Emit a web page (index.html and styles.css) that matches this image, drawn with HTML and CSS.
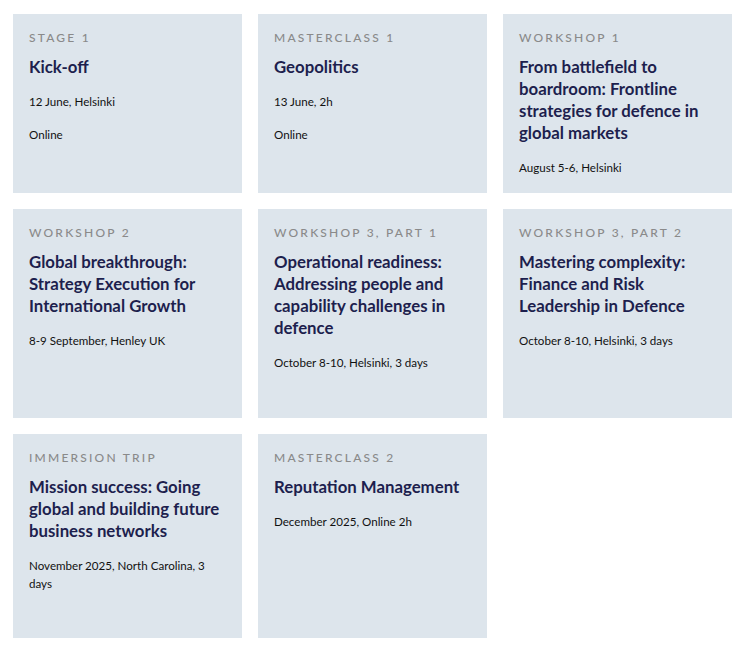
FILE: index.html
```html
<!DOCTYPE html>
<html lang="en">
<head>
<meta charset="utf-8">
<title>Programme</title>
<link rel="stylesheet" href="styles.css">
</head>
<body>
<div class="grid">
  <div class="card">
    <div class="label">Stage 1</div>
    <h3 class="title">Kick-off</h3>
    <p class="info">12 June, Helsinki</p>
    <p class="info">Online</p>
  </div>
  <div class="card">
    <div class="label">Masterclass 1</div>
    <h3 class="title">Geopolitics</h3>
    <p class="info">13 June, 2h</p>
    <p class="info">Online</p>
  </div>
  <div class="card">
    <div class="label">Workshop 1</div>
    <h3 class="title">From battlefield to boardroom: Frontline strategies for defence in global markets</h3>
    <p class="info">August 5-6, Helsinki</p>
  </div>
  <div class="card">
    <div class="label">Workshop 2</div>
    <h3 class="title">Global breakthrough: Strategy Execution for International Growth</h3>
    <p class="info">8-9 September, Henley UK</p>
  </div>
  <div class="card">
    <div class="label">Workshop 3, Part 1</div>
    <h3 class="title">Operational readiness: Addressing people and capability challenges in defence</h3>
    <p class="info">October 8-10, Helsinki, 3 days</p>
  </div>
  <div class="card">
    <div class="label">Workshop 3, Part 2</div>
    <h3 class="title">Mastering complexity: Finance and Risk Leadership in Defence</h3>
    <p class="info">October 8-10, Helsinki, 3 days</p>
  </div>
  <div class="card">
    <div class="label">Immersion trip</div>
    <h3 class="title">Mission success: Going global and building future business networks</h3>
    <p class="info">November 2025, North Carolina, 3 days</p>
  </div>
  <div class="card">
    <div class="label">Masterclass 2</div>
    <h3 class="title">Reputation Management</h3>
    <p class="info">December 2025, Online 2h</p>
  </div>
</div>
</body>
</html>
```
FILE: styles.css
```css
html, body {
  margin: 0;
  padding: 0;
  background: #ffffff;
}
body {
  padding: 14px 14px 0 13px;
  font-family: Lato, "Liberation Sans", sans-serif;
}
.grid {
  display: grid;
  grid-template-columns: repeat(3, 229px);
  grid-template-rows: 179px 209px 204px;
  gap: 16px;
}
.card {
  background: #dde5ec;
  padding: 16px 16px;
  box-sizing: border-box;
}
.label {
  font-size: 12px;
  line-height: 16px;
  letter-spacing: 2.2px;
  text-transform: uppercase;
  color: #8a8a8a;
  font-weight: 500;
}
.title {
  margin: 10px 0 0;
  font-size: 16.8px;
  line-height: 22px;
  font-weight: 700;
  color: #1d1f4e;
}
.info {
  margin: 15px 0 0;
  font-size: 11.6px;
  line-height: 18px;
  color: #111111;
}
```
